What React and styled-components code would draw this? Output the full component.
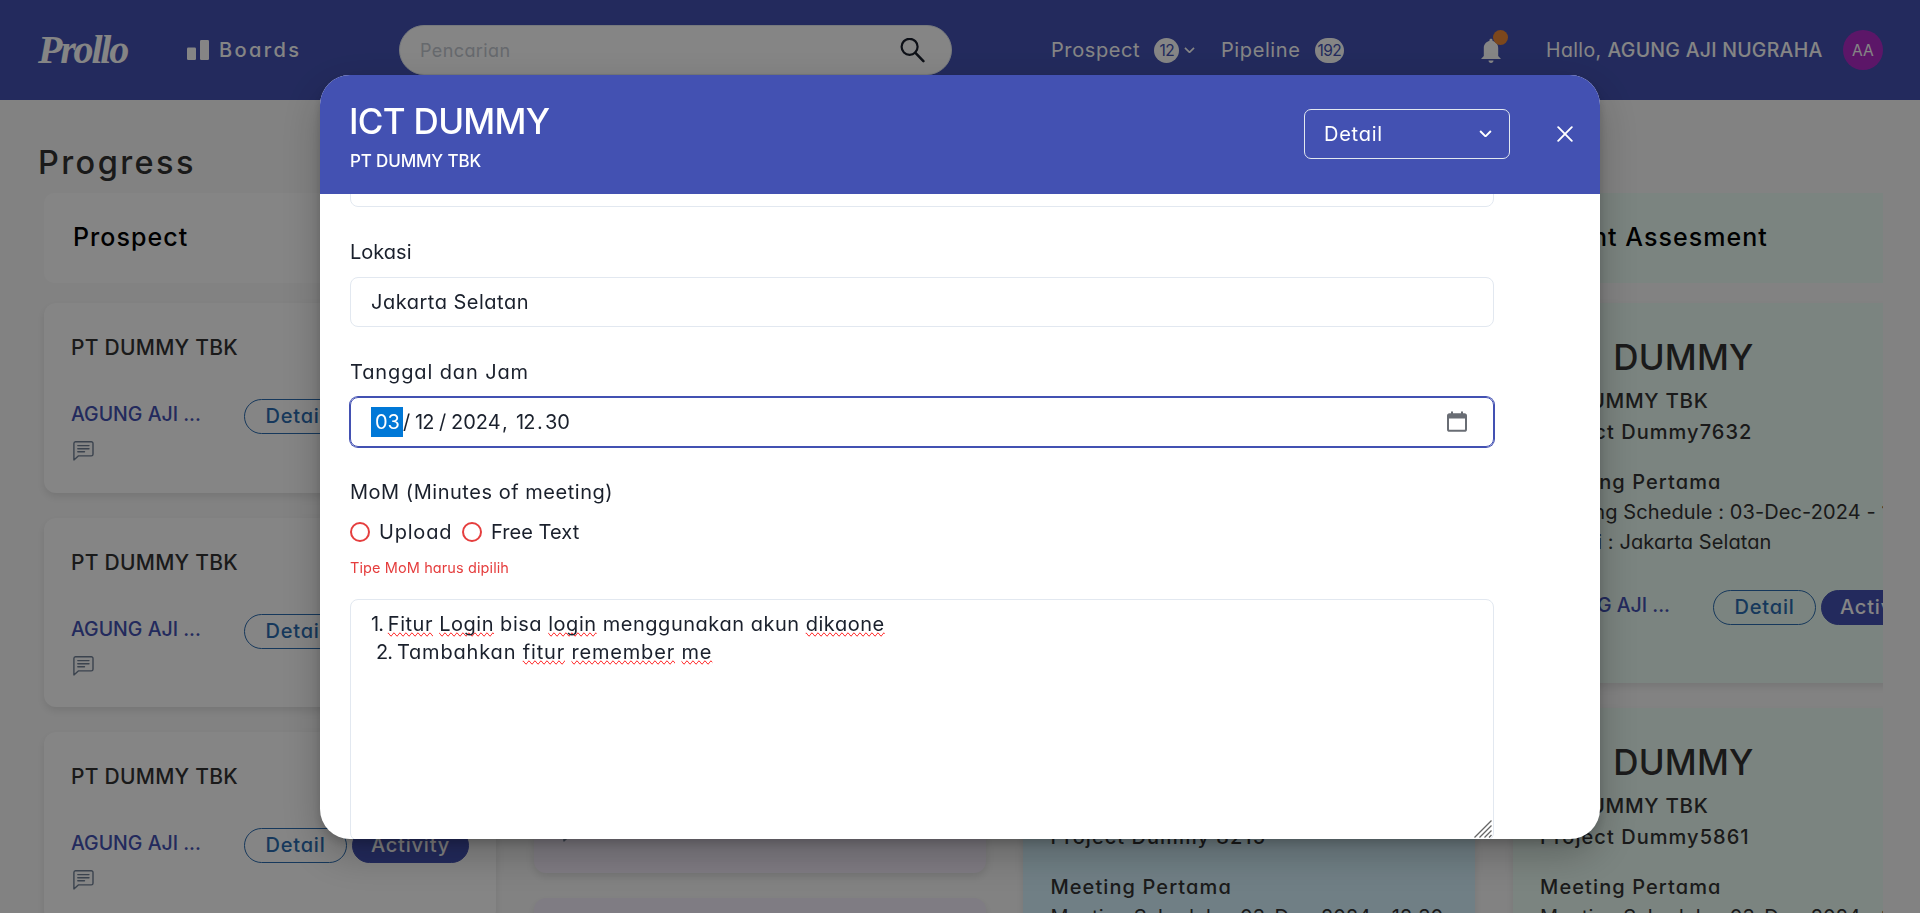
import React from 'react';
import styled, { createGlobalStyle, css } from 'styled-components';

const colors = {
  primary: '#4351b2',
  ink: '#1a202c',
  text: '#333333',
  border: '#e2e8f0',
  link: '#2b6cb0',
  danger: '#e53e3e',
};

const Global = createGlobalStyle`
  * { box-sizing: border-box; }
  body {
    margin: 0;
    background: #fafafa;
    overflow: hidden;
    font-family: Inter, "Open Sans", sans-serif;
    font-feature-settings: "cv11";
    font-size: 20px;
    color: ${colors.ink};
  }
`;

const Page = styled.div`
  height: 913px;
  overflow: hidden;
`;

/* ---------- top bar ---------- */

const TopBar = styled.header`
  display: flex;
  align-items: center;
  height: 100px;
  padding: 0 37px 0 38px;
  background: ${colors.primary};
  color: #fff;
  white-space: nowrap;
`;

const Logo = styled.div`
  width: 149px;
  font-family: "Liberation Serif", serif;
  font-style: italic;
  font-weight: 700;
  font-size: 40px;
  letter-spacing: -2.2px;
  line-height: 50px;
`;

const BoardsLink = styled.div`
  display: flex;
  align-items: center;
  gap: 10px;
  width: 212px;
  font-size: 20px;
  font-weight: 500;
  letter-spacing: 2.4px;
`;

const SearchBox = styled.div`
  display: flex;
  align-items: center;
  justify-content: space-between;
  width: 553px;
  height: 50px;
  margin-right: 99px;
  padding: 0 26px 0 20px;
  border: 1px solid ${colors.border};
  border-radius: 25px;
  background: #fff;
  color: #c4c9d1;
  font-size: 18px;
  letter-spacing: 0.4px;
`;

const NavItem = styled.div`
  display: flex;
  align-items: center;
  width: ${(p) => p.$width}px;
  letter-spacing: 0.6px;
`;

const Count = styled.span`
  display: grid;
  place-items: center;
  min-width: 25px;
  height: 25px;
  margin: 0 5px 0 ${(p) => p.$offset}px;
  padding: 0 3px;
  border-radius: 13px;
  background: #fff;
  color: ${colors.primary};
  font-size: 15.5px;
  letter-spacing: -0.6px;
`;

const Bell = styled.div`
  position: relative;
  width: 66px;
  height: 40px;
  padding: 8px 0 0 1px;
`;

const BellDot = styled.span`
  position: absolute;
  left: 13px;
  top: 0;
  width: 15px;
  height: 15px;
  border-radius: 50%;
  background: #ed8936;
`;

const Greeting = styled.div`
  width: 297px;
  font-size: 19.5px;
  letter-spacing: 0.4px;
  b { font-weight: 500; letter-spacing: 0.25px; }
`;

const Avatar = styled.div`
  display: grid;
  place-items: center;
  width: 40px;
  height: 40px;
  border-radius: 50%;
  background: #b12bc8;
  font-size: 15.5px;
  letter-spacing: 0.3px;
`;

/* ---------- board ---------- */

const Board = styled.main`
  padding: 38px 37px 0 37px;
`;

const BoardTitle = styled.h1`
  margin: 0;
  height: 55px;
  padding-left: 1px;
  font-size: 32.5px;
  font-weight: 500;
  line-height: 50px;
  letter-spacing: 2.4px;
  color: ${colors.text};
`;

const Columns = styled.div`
  display: flex;
  gap: 37.7px;
  height: 720px;
  padding-left: 7px;
  overflow: hidden;
`;

const Column = styled.section`
  flex: 0 0 452px;
  min-width: 0;
  display: flex;
  flex-direction: column;
  gap: 25px;
`;

const ColumnHeader = styled.h2`
  flex: none;
  height: 90px;
  margin: 0 0 -5px;
  padding: 0 29px;
  border-radius: 10px;
  background: ${(p) => p.$tone};
  color: #000;
  font-size: 25px;
  font-weight: 500;
  line-height: 89px;
  letter-spacing: 1.05px;
  white-space: nowrap;
`;

const Card = styled.article`
  flex: none;
  height: ${(p) => p.$height}px;
  padding: 28px 27px 0;
  border-radius: 12px;
  background: ${(p) => p.$tone};
  box-shadow: 0 4px 8px rgba(0, 0, 0, 0.1);
  color: ${colors.text};
  white-space: nowrap;
`;

const LeadCompany = styled.h3`
  margin: 1px 0 35px;
  font-size: 21px;
  font-weight: 500;
  line-height: 32px;
  letter-spacing: 0.25px;
`;

const ProjectTitle = styled.h3`
  margin: 4px 0 6px;
  font-size: 35px;
  font-weight: 500;
  line-height: 44px;
  letter-spacing: 0.2px;
  word-spacing: 5px;
`;

const Company = styled.div`
  font-size: 20.5px;
  font-weight: 500;
  line-height: 31px;
  letter-spacing: 0.7px;
`;

const Project = styled.div`
  margin-bottom: 19px;
  font-weight: 500;
  line-height: 32px;
  letter-spacing: 1.05px;
`;

const Meeting = styled.div`
  line-height: 30px;
  letter-spacing: 0.1px;
  ${(p) => p.$heading && css`
    font-weight: 500;
    letter-spacing: 1.1px;
  `}
`;

const CardFooter = styled.div`
  display: flex;
  gap: 5px;
  margin-top: ${(p) => p.$offset || 0}px;
`;

const Owner = styled.div`
  flex: 0 0 168px;
  color: ${colors.primary};
  font-size: 19.5px;
  font-weight: 500;
  line-height: 31px;
`;

const Pill = styled.button`
  flex: none;
  width: ${(p) => (p.$solid ? 117 : 103)}px;
  height: 35px;
  padding: 0;
  border: 1px solid ${(p) => (p.$solid ? colors.primary : colors.link)};
  border-radius: 18px;
  background: ${(p) => (p.$solid ? colors.primary : 'transparent')};
  color: ${(p) => (p.$solid ? '#fff' : colors.link)};
  font: 500 20px/33px Inter, sans-serif;
  font-feature-settings: "cv11";
  letter-spacing: 0.8px;
`;

const Note = styled.div`
  height: 20px;
  margin-top: 7px;
  padding-left: 2px;
  svg { display: block; }
`;

/* ---------- modal ---------- */

const Overlay = styled.div`
  position: fixed;
  inset: 0;
  display: flex;
  justify-content: center;
  align-items: flex-start;
  padding-top: 75px;
  background: rgba(0, 0, 0, 0.48);
`;

const Modal = styled.div`
  width: 1280px;
  height: 764px;
  border-radius: 30px;
  overflow: hidden;
  background: #fff;
  box-shadow: 0 5px 10px rgba(0, 0, 0, 0.15), 0 15px 40px rgba(0, 0, 0, 0.25);
`;

const ModalHeader = styled.div`
  display: flex;
  align-items: center;
  height: 119px;
  padding: 0 27px 2px 29px;
  background: ${colors.primary};
  color: #fff;
`;

const Heading = styled.div`
  flex: 1;
  padding-top: 9px;
`;

const ModalTitle = styled.h2`
  margin: 0;
  font-size: 35px;
  font-weight: 500;
  line-height: 44px;
  letter-spacing: -0.7px;
`;

const ModalSubtitle = styled.div`
  padding: 2px 0 0 1px;
  font-size: 17px;
  font-weight: 500;
  line-height: 32px;
  letter-spacing: -0.15px;
`;

const Select = styled.div`
  display: flex;
  align-items: center;
  justify-content: space-between;
  width: 206px;
  height: 50px;
  margin-right: 47px;
  padding: 0 17px 0 19px;
  border: 1px solid ${colors.border};
  border-radius: 7px;
  letter-spacing: 0.75px;
`;

const ModalBody = styled.div`
  height: 645px;
  padding: 0 106px 0 30px;
  overflow: hidden;
`;

const Form = styled.div`
  margin-top: -37px;
`;

const Field = styled.div`
  margin-bottom: 30px;
`;

const Label = styled.label`
  display: block;
  margin-bottom: 10px;
  line-height: 30px;
  letter-spacing: ${(p) => p.$spacing}px;
`;

const Input = styled.div`
  display: flex;
  align-items: center;
  height: 50px;
  padding: 0 26px 0 20px;
  border: 1px solid ${colors.border};
  border-radius: 8px;
  letter-spacing: 0.5px;
  ${(p) => p.$focused && css`
    border-color: ${colors.primary};
    box-shadow: 0 0 0 1px ${colors.primary};
  `}
`;

const DatePart = styled.span`
  width: ${(p) => p.$width}px;
  letter-spacing: ${(p) => p.$spacing || 0}px;
  ${(p) => p.$selected && css`
    height: 30px;
    padding-left: 4px;
    background: #0078d7;
    color: #fff;
    line-height: 30px;
  `}
`;

const Spacer = styled.span`
  flex: 1;
`;

const RadioRow = styled.div`
  display: flex;
  align-items: center;
  height: 20px;
  margin-top: 15px;
`;

const Radio = styled.span`
  width: 20px;
  height: 20px;
  margin-right: 9px;
  border: 2px solid ${colors.danger};
  border-radius: 50%;
`;

const RadioLabel = styled.span`
  width: ${(p) => p.$width}px;
  letter-spacing: ${(p) => p.$spacing}px;
`;

const ErrorText = styled.div`
  margin: 15px 0 20px;
  color: ${colors.danger};
  font-size: 14.5px;
  line-height: 22px;
  letter-spacing: 0.1px;
`;

const TextArea = styled.div`
  position: relative;
  height: 242px;
  padding: 10px 20px;
  border: 1px solid ${colors.border};
  border-radius: 8px;
  line-height: 28px;
  white-space: pre;
`;

const Line = styled.div`
  letter-spacing: ${(p) => p.$spacing}px;
  padding-left: ${(p) => p.$indent || 0}px;
`;

const LineNumber = styled.span`
  letter-spacing: -0.9px;
`;

const Misspelt = styled.span`
  text-decoration-line: spelling-error;
`;

const Resizer = styled.svg`
  position: absolute;
  right: 1px;
  bottom: 2px;
`;

/* ---------- icons ---------- */

const Chevron = ({ size = 13 }) => (
  <svg width={size} height={size * 0.6} viewBox="0 0 13 8" fill="none" stroke="currentColor" strokeWidth="2">
    <path d="M1 1l5.5 5.5L12 1" />
  </svg>
);

const BarsIcon = () => (
  <svg width="22" height="20" viewBox="0 0 22 20" fill="#fff">
    <rect x="0" y="7.5" width="9" height="12.5" rx="1.2" />
    <rect x="13" y="0" width="9" height="20" rx="1.2" />
  </svg>
);

const SearchIcon = () => (
  <svg width="25" height="25" viewBox="0 0 25 25" fill="none" stroke="#1a202c" strokeWidth="2.2">
    <circle cx="9.6" cy="8.8" r="8" />
    <path d="M15.2 14.6l8.2 8.6" strokeWidth="2.5" strokeLinecap="round" />
  </svg>
);

const BellIcon = () => (
  <svg width="20" height="26" viewBox="0 0 20 26" fill="#fff">
    <path d="M10 0.8c1 0 1.6.6 1.6 1.5v.8c3.3.7 5.6 3.4 5.6 7.2v7.8l2.8 2.8H0l2.8-2.8v-7.8c0-3.8 2.3-6.5 5.6-7.2v-.8c0-.9.6-1.5 1.6-1.5z" />
    <path d="M7.5 22.500h5c0 1.400-1.100 2.500-2.500 2.500s-2.500-1.100-2.500-2.500z" />
  </svg>
);

const NoteIcon = () => (
  <svg width="21" height="20" viewBox="0 0 21 20" fill="none" stroke="#718096" strokeWidth="1.4" strokeLinecap="round" strokeLinejoin="round">
    <path d="M2.500.8h15.800a1.700 1.700 0 0 1 1.700 1.700v10.700a1.700 1.700 0 0 1-1.700 1.700H5.300L.9 18.900V2.500A1.700 1.700 0 0 1 2.500.8z" />
    <path d="M4.800 4.600H16M4.800 7.700H16M4.800 10.700H11.500" />
  </svg>
);

const CloseIcon = () => (
  <svg width="16" height="16" viewBox="0 0 16 16" stroke="#fff" strokeWidth="1.9" strokeLinecap="round">
    <path d="M1.200 1.200l13.600 13.600M14.800 1.200L1.200 14.800" />
  </svg>
);

const CalendarIcon = () => (
  <svg width="20" height="23" viewBox="0 0 20 23" fill="none">
    <rect x="1" y="3.200" width="18" height="16.600" rx="1.600" stroke="#696d74" strokeWidth="2" />
    <path d="M1 3h18v4.500H1zM4 .5h2v3H4zM14 .5h2v3h-2z" fill="#696d74" />
  </svg>
);

const ResizeIcon = () => (
  <Resizer width="18" height="18" viewBox="0 0 18 18" stroke="#666" strokeWidth="1.300">
    <path d="M.5 17.500L17.500 .5M5.500 17.500L17.500 5.500M10.500 17.500L17.500 10.500M15 17.500L17.500 15" />
  </Resizer>
);

/* ---------- cards ---------- */

const Footer = ({ offset }) => (
  <>
    <CardFooter $offset={offset}>
      <Owner>AGUNG AJI ...</Owner>
      <Pill>Detail</Pill>
      <Pill $solid>Activity</Pill>
    </CardFooter>
    <Note><NoteIcon /></Note>
  </>
);

const LeadCard = ({ tone = '#ffffff' }) => (
  <Card $tone={tone} $height={189.5}>
    <LeadCompany>PT DUMMY TBK</LeadCompany>
    <Footer />
  </Card>
);

const ProjectCard = ({ tone, project, height = 380 }) => (
  <Card $tone={tone} $height={height}>
    <ProjectTitle>ICT DUMMY</ProjectTitle>
    <Company>PT DUMMY TBK</Company>
    <Project>{project}</Project>
    <Meeting $heading>Meeting Pertama</Meeting>
    <Meeting>Meeting Schedule : 03-Dec-2024 - 12:30</Meeting>
    <Meeting>Lokasi : Jakarta Selatan</Meeting>
    <Footer offset={33} />
  </Card>
);

const PURPLE = '#f4edfb';
const BLUE = '#d7f4ff';
const GREEN = '#ecfdf5';

export default function App() {
  return (
    <Page>
      <Global />
      <TopBar>
        <Logo>Prollo</Logo>
        <BoardsLink><BarsIcon />Boards</BoardsLink>
        <SearchBox>Pencarian<SearchIcon /></SearchBox>
        <NavItem $width={170}>
          Prospect
          <Count $offset={14}>12</Count>
          <Chevron size={11} />
        </NavItem>
        <NavItem $width={259}>
          Pipeline
          <Count $offset={14}>192</Count>
        </NavItem>
        <Bell><BellIcon /><BellDot /></Bell>
        <Greeting>Hallo, <b>AGUNG AJI NUGRAHA</b></Greeting>
        <Avatar>AA</Avatar>
      </TopBar>

      <Board>
        <BoardTitle>Progress</BoardTitle>
        <Columns>
          <Column>
            <ColumnHeader $tone="#ffffff">Prospect</ColumnHeader>
            <LeadCard />
            <LeadCard />
            <LeadCard />
          </Column>
          <Column>
            <ColumnHeader $tone={PURPLE}>Approach</ColumnHeader>
            <ProjectCard tone={PURPLE} project="Project Dummy" height={355.5} />
            <LeadCard tone={PURPLE} />
            <LeadCard tone={PURPLE} />
          </Column>
          <Column>
            <ColumnHeader $tone={BLUE}>Meeting</ColumnHeader>
            <ProjectCard tone={BLUE} project="Project Dummy 8215" />
            <ProjectCard tone={BLUE} project="Project Dummy 8215" />
          </Column>
          <Column>
            <ColumnHeader $tone={GREEN}>Client Assesment</ColumnHeader>
            <ProjectCard tone={GREEN} project="Project Dummy7632" />
            <ProjectCard tone={GREEN} project="Project Dummy5861" />
          </Column>
        </Columns>
      </Board>

      <Overlay>
        <Modal>
          <ModalHeader>
            <Heading>
              <ModalTitle>ICT DUMMY</ModalTitle>
              <ModalSubtitle>PT DUMMY TBK</ModalSubtitle>
            </Heading>
            <Select>Detail<Chevron /></Select>
            <CloseIcon />
          </ModalHeader>
          <ModalBody>
            <Form>
              <Field>
                <Input>Meeting Pertama</Input>
              </Field>
              <Field>
                <Label $spacing={0}>Lokasi</Label>
                <Input>Jakarta Selatan</Input>
              </Field>
              <Field>
                <Label $spacing={0.88}>Tanggal dan Jam</Label>
                <Input $focused>
                  <DatePart $selected $width={32}>03</DatePart>
                  <DatePart $width={12}>/</DatePart>
                  <DatePart $width={24} $spacing={-1}>12</DatePart>
                  <DatePart $width={12}>/</DatePart>
                  <DatePart $width={51}>2024</DatePart>
                  <DatePart $width={14}>,</DatePart>
                  <DatePart $width={21} $spacing={-1}>12</DatePart>
                  <DatePart $width={8}>.</DatePart>
                  <DatePart $width={26}>30</DatePart>
                  <Spacer />
                  <CalendarIcon />
                </Input>
              </Field>
              <Label $spacing={0.53}>MoM (Minutes of meeting)</Label>
              <RadioRow>
                <Radio />
                <RadioLabel $width={83} $spacing={0.8}>Upload</RadioLabel>
                <Radio />
                <RadioLabel $width={100} $spacing={0.05}>Free Text</RadioLabel>
              </RadioRow>
              <ErrorText>Tipe MoM harus dipilih</ErrorText>
              <TextArea>
                <Line $spacing={0.52}>
                  <LineNumber>1. </LineNumber><Misspelt>Fitur</Misspelt> <Misspelt>Login</Misspelt> bisa <Misspelt>login</Misspelt> menggunakan akun <Misspelt>dikaone</Misspelt>
                </Line>
                <Line $spacing={0.82} $indent={5}>
                  <LineNumber>2. </LineNumber>Tambahkan <Misspelt>fitur</Misspelt> <Misspelt>remember</Misspelt> <Misspelt>me</Misspelt>
                </Line>
                <ResizeIcon />
              </TextArea>
            </Form>
          </ModalBody>
        </Modal>
      </Overlay>
    </Page>
  );
}
